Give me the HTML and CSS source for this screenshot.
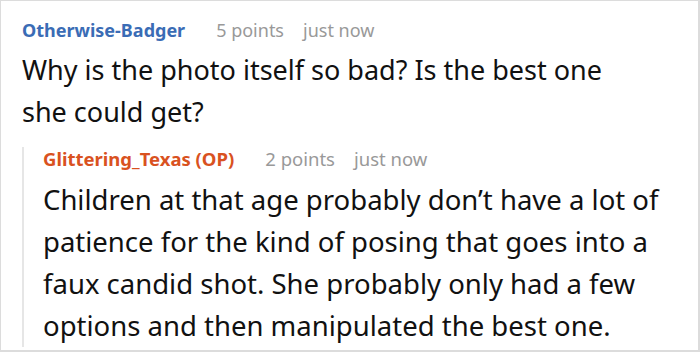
FILE: index.html
```html
<!DOCTYPE html>
<html>
<head>
<meta charset="utf-8">
<link rel="stylesheet" href="styles.css">
</head>
<body>
<div class="frame">
  <div class="comment">
    <div class="meta">
      <span class="author author-blue">Otherwise-Badger</span>
      <span class="info">5 points</span>
      <span class="info">just now</span>
    </div>
    <p class="text">Why is the photo itself so bad? Is the best one she could get?</p>
    <div class="reply">
      <div class="meta meta-reply">
        <span class="author author-orange">Glittering_Texas (OP)</span>
        <span class="info">2 points</span>
        <span class="info">just now</span>
      </div>
      <p class="text text-reply">Children at that age probably don’t have a lot of patience for the kind of posing that goes into a faux candid shot. She probably only had a few options and then manipulated the best one.</p>
    </div>
  </div>
</div>
</body>
</html>
```

FILE: styles.css
```css
* { box-sizing: border-box; }
html, body { margin: 0; padding: 0; background: #fff; }
body { font-family: "Noto Sans", "Open Sans", sans-serif; }
.frame {
  width: 700px;
  height: 352px;
  border: 1px solid #dcdcdc;
  border-right-width: 2px;
  border-bottom-width: 2px;
  padding: 17px 0 0 21px;
  overflow: hidden;
}
.meta {
  display: flex;
  font-size: 18px;
  line-height: 24px;
}
.meta-reply { font-size: 18.5px; }
.author { font-weight: 700; margin-right: 31px; }
.author-blue { color: #3a6cb5; }
.author-orange { color: #d9521f; }
.info { color: #999; margin-right: 19px; }
.text {
  margin: 7px 0 0;
  font-size: 27px;
  line-height: 42px;
  color: #111;
  padding-right: 60px;
}
.text-reply {
  font-size: 27.5px;
  margin: 8px 0 -14px;
  padding-right: 0;
}
.reply {
  margin-top: 14px;
  border-left: 2px solid #e6e6e6;
  padding-left: 19px;
}
```
